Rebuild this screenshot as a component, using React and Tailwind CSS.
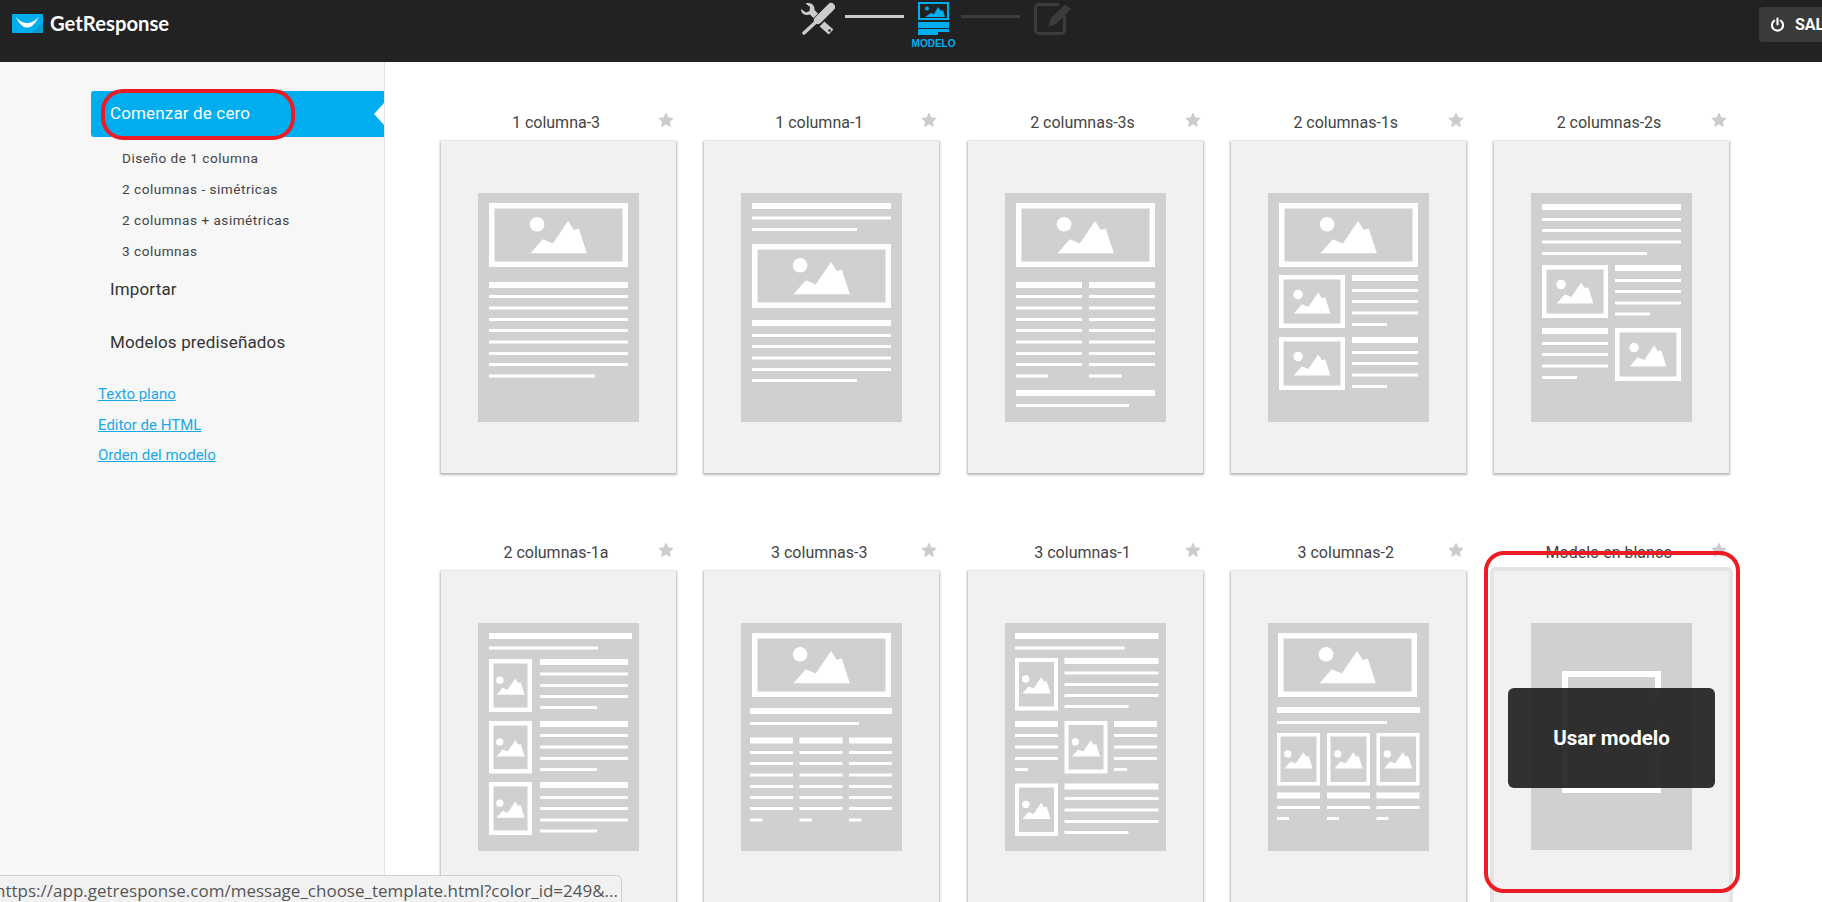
import React from 'react';

const subItems = ['Diseño de 1 columna', '2 columnas - simétricas', '2 columnas + asimétricas', '3 columnas'];
const links = ['Texto plano', 'Editor de HTML', 'Orden del modelo'];

// Thumbnail pieces, all in px inside the 161-wide grey sheet
const Bar = ({ x, y, w, h = 3 }) => <rect x={x} y={y} width={w} height={h} fill="#fff" />;

const TextCol = ({ x, w, ys, last }) => (
  <>
    {ys.map((y, i) => (
      <Bar key={y} x={x} y={y} w={i === ys.length - 1 && last ? last : w} h={i === 0 ? 6 : 3} />
    ))}
  </>
);

const Pic = ({ x, y, w, h, b = 4.5, s = 0.5 }) => (
  <>
    <rect x={x + b / 2} y={y + b / 2} width={w - b} height={h - b} fill="none" stroke="#fff" strokeWidth={b} />
    <g transform={`translate(${x + w / 2 - 28 * s} ${y + h / 2 - 18 * s}) scale(${s})`} fill="#fff">
      <circle cx="6.6" cy="7.3" r="7.3" />
      <polygon points="0,36.3 12.3,22.3 22.3,26.6 37.6,4 43.3,13 48.3,11.6 56.3,36.3" />
    </g>
  </>
);

const BigPic = ({ x = 11, y = 10, w = 139 }) => <Pic x={x} y={y} w={w} h={64} b={5.5} s={1} />;

const thinRows = [102, 113.5, 125, 136, 147.5, 159, 170];

const Sheet = ({ h = 229, children }) => (
  <div className="mx-auto w-[161px] bg-[#d0d0d0]">
    <svg width="161" height={h} viewBox={`0 0 161 ${h}`} className="block">
      {children}
    </svg>
  </div>
);

const OneCol3 = () => (
  <Sheet>
    <BigPic />
    <TextCol x={11} w={139} ys={[89, ...thinRows, 181.5]} last={106} />
  </Sheet>
);

const OneCol1 = () => (
  <Sheet>
    <TextCol x={11} w={139} ys={[10]} />
    <Bar x={11} y={23.5} w={139} />
    <Bar x={11} y={35} w={105} />
    <BigPic y={51} />
    <TextCol x={11} w={139} ys={[127, 141, 152, 163.5, 175, 186]} last={105} />
  </Sheet>
);

const TwoCol3s = () => (
  <Sheet>
    <BigPic />
    <TextCol x={11} w={66} ys={[89, ...thinRows, 181.5]} last={32} />
    <TextCol x={84} w={66} ys={[89, ...thinRows, 181.5]} last={33} />
    <Bar x={11} y={197} w={139} h={6} />
    <Bar x={11} y={211} w={113} />
  </Sheet>
);

const TwoCol1s = () => (
  <Sheet>
    <BigPic />
    <Pic x={11} y={82} w={66} h={53} s={0.65} />
    <TextCol x={84} w={66} ys={[82, 96, 107, 118.5, 130]} last={35} />
    <Pic x={11} y={144} w={66} h={53} s={0.65} />
    <TextCol x={84} w={66} ys={[144, 158, 169, 180.5, 192]} last={35} />
  </Sheet>
);

const TwoCol2s = () => (
  <Sheet>
    <TextCol x={11} w={139} ys={[11, 25, 36, 47.5, 59]} last={105} />
    <Pic x={11} y={72} w={66} h={53} s={0.65} />
    <TextCol x={84} w={66} ys={[72, 86, 97, 108.5, 119.5]} last={35} />
    <TextCol x={11} w={66} ys={[135, 149, 160, 171.5, 183]} last={35} />
    <Pic x={84} y={135} w={66} h={53} s={0.65} />
  </Sheet>
);

const TwoCol1a = () => (
  <Sheet h={228}>
    <Bar x={11} y={10} w={143} h={6} />
    <Bar x={11} y={23.5} w={109} />
    <Pic x={11} y={36} w={43} h={53} />
    <TextCol x={62} w={88} ys={[36, 49.5, 61, 72, 83]} last={57} />
    <Pic x={11} y={98} w={43} h={52.5} />
    <TextCol x={62} w={88} ys={[98, 111, 122.5, 134, 145]} last={57} />
    <Pic x={11} y={159} w={43} h={53} />
    <TextCol x={62} w={88} ys={[159, 173, 184, 195.5, 206.5]} last={57} />
  </Sheet>
);

const ThreeCol3 = () => {
  const rows = [114.5, 128, 139, 150.5, 162, 173, 184, 195.5];
  return (
    <Sheet h={228}>
      <BigPic />
      <Bar x={9} y={85} w={142} h={6} />
      <Bar x={9} y={99} w={109} />
      <TextCol x={9} w={43} ys={rows} last={12.5} />
      <TextCol x={58.5} w={43} ys={rows} last={12.5} />
      <TextCol x={108} w={43} ys={rows} last={12.5} />
    </Sheet>
  );
};

const ThreeCol1 = () => (
  <Sheet h={228}>
    <Bar x={10} y={10} w={143.5} h={6} />
    <Bar x={10} y={23.5} w={109.5} />
    <Pic x={10} y={35} w={43} h={52.5} b={4} />
    <TextCol x={59.5} w={94} ys={[35, 48.5, 60, 71, 82]} last={64} />
    <TextCol x={10} w={43} ys={[98, 111, 122.5, 134, 145]} last={13} />
    <Pic x={59.5} y={98} w={43} h={52.5} b={4} />
    <TextCol x={109} w={43} ys={[98, 111, 122.5, 134, 145]} last={13} />
    <Pic x={10} y={160.5} w={43} h={52.5} b={4} />
    <TextCol x={59.5} w={94} ys={[160.5, 174, 185.5, 197, 208]} last={64} />
  </Sheet>
);

const ThreeCol2 = () => {
  const cols = [9, 59, 108.5];
  return (
    <Sheet h={228}>
      <BigPic x={10} />
      <Bar x={9} y={84} w={143} h={6} />
      <Bar x={9} y={98} w={110} />
      {cols.map((x) => (
        <React.Fragment key={x}>
          <Pic x={x} y={110} w={43} h={52.5} b={3.5} />
          <TextCol x={x} w={43} ys={[169.5, 183, 194]} last={12} />
        </React.Fragment>
      ))}
    </Sheet>
  );
};

const Blank = () => (
  <Sheet h={227}>
    <rect x="34" y="51" width="93" height="116" fill="none" stroke="#fff" strokeWidth="6" />
    <polygon points="86,128 96,107 138,66 149,76 107,117" fill="#c6c6c6" stroke="#d0d0d0" strokeWidth="5" />
  </Sheet>
);

const templates = [
  { title: '1 columna-3', Thumb: OneCol3 },
  { title: '1 columna-1', Thumb: OneCol1 },
  { title: '2 columnas-3s', Thumb: TwoCol3s },
  { title: '2 columnas-1s', Thumb: TwoCol1s },
  { title: '2 columnas-2s', Thumb: TwoCol2s },
  { title: '2 columnas-1a', Thumb: TwoCol1a },
  { title: '3 columnas-3', Thumb: ThreeCol3 },
  { title: '3 columnas-1', Thumb: ThreeCol1 },
  { title: '3 columnas-2', Thumb: ThreeCol2 },
  { title: 'Modelo en blanco', Thumb: Blank, active: true },
];

const Star = () => (
  <svg width="16" height="16" viewBox="0 0 24 24" fill="#cccccc" stroke="#cccccc" strokeWidth="2" strokeLinejoin="round" className="shrink-0">
    <path d="M12 2.5l2.9 6.3 6.9.8-5.1 4.7 1.4 6.8L12 17.2l-6.100 3.900 1.400-6.800-5.100-4.700 6.900-.8z" />
  </svg>
);

const TemplateCard = ({ title, Thumb, active }) => (
  <div>
    <div className="flex h-[29px] items-start pl-[13px] pr-[2px]">
      <span className="flex-1 pt-px text-center text-[16px] leading-[20px] text-[#444]">{title}</span>
      <Star />
    </div>
    <div
      className={`relative h-[332px] bg-[#f1f1f1] pt-[52px] ${
        active
          ? 'rounded-[2px] shadow-[0_0_0_4px_#e4e4e4]'
          : 'shadow-[0_1px_2px_1px_rgba(0,0,0,0.28)]'
      }`}
    >
      <Thumb />
      {active && (
        <>
          <div className="absolute inset-x-[14px] top-[117px] flex h-[100px] items-center justify-center rounded-[6px] bg-[rgba(34,34,34,0.93)] text-[20.5px] font-bold text-white">
            Usar modelo
          </div>
          <div className="absolute -left-[10px] -top-[20px] h-[342px] w-[256px] rounded-[20px] border-4 border-[#ed1c24]" />
        </>
      )}
    </div>
  </div>
);

const Logo = () => (
  <svg width="31" height="19" viewBox="0 0 31 19" className="shrink-0">
    <rect width="31" height="19" rx="1" fill="#00aeef" />
    <path d="M31 9V18a1 1 0 0 1-1 1H19z" fill="#0a9bd1" />
    <path d="M3.500 2.700Q15 15.300 27 2.700Q15 25 3.500 2.700z" fill="#fff" />
  </svg>
);

const ToolsIcon = () => (
  <svg width="34" height="33" viewBox="0 0 34 33" fill="none" stroke="#cccccc" className="shrink-0">
    <path d="M30 5L17 18" strokeWidth="8" strokeLinecap="round" />
    <path d="M17 18L3 31" strokeWidth="3.500" strokeLinecap="round" />
    <path
      d="M0 7l5 3.500 3.500-1.500.5-4-4.500-3.500C10 0 14 3 13.500 8L17 11.500 12.500 16 9 12.500C4 14 0 12 0 7z"
      fill="#cccccc"
      stroke="none"
    />
    <path d="M21 22L30 30" strokeWidth="7" />
    <circle cx="28.500" cy="28.500" r="1.300" fill="#222" stroke="none" />
  </svg>
);

const PictureIcon = () => (
  <svg width="31" height="33" viewBox="0 0 31 33" fill="#00aeef" className="shrink-0">
    <rect x="1" y="1" width="29" height="16" fill="none" stroke="#00aeef" strokeWidth="2" />
    <circle cx="9" cy="6.500" r="2" />
    <polygon points="7,15 13,11 16,12 20,5 23,9 25,8 27,15" />
    <rect y="20" width="31" height="6" />
    <rect y="27" width="31" height="3" />
    <rect y="30" width="20" height="3" />
  </svg>
);

const EditIcon = () => (
  <svg width="38" height="33" viewBox="0 0 38 33" fill="none" className="shrink-0">
    <path d="M25 1.500H5a3.500 3.500 0 0 0-3.500 3.500V27A3.500 3.500 0 0 0 5 30.500H27a3.500 3.500 0 0 0 3.500-3.500V13" stroke="#3c3c3c" strokeWidth="3" />
    <polygon points="14,24 17,15 31,1.500 37,6 23,20.500" fill="#3c3c3c" />
  </svg>
);

const PowerIcon = () => (
  <svg width="15" height="16" viewBox="0 0 14 15" fill="none" stroke="#fff" strokeWidth="2" strokeLinecap="round" className="shrink-0">
    <path d="M7 1.500V7" />
    <path d="M3.800 3.500a5.200 5.200 0 1 0 6.400 0" />
  </svg>
);

const App = () => (
  <div className="relative flex h-screen w-full flex-col overflow-hidden bg-white font-['Roboto',sans-serif]">
    {/* Top bar */}
    <header className="flex h-[62px] shrink-0 items-start overflow-hidden bg-[#222222] pl-[12px]">
      <div className="flex h-[46px] w-[789px] shrink-0 items-center gap-[7px]">
        <Logo />
        <span className="font-['Lato',sans-serif] text-[20.25px] font-bold text-white">GetResponse</span>
      </div>

      <div className="flex w-[271px] shrink-0 items-start pt-[2px]">
        <ToolsIcon />
        <div className="ml-[10px] mt-[13px] h-[3px] w-[59px] bg-[#cccccc]" />
        <div className="ml-[14px] flex w-[31px] flex-col items-center">
          <PictureIcon />
          <span className="mt-[3px] whitespace-nowrap font-['Liberation_Sans',sans-serif] text-[10px] font-bold leading-[12px] text-[#00aeef]">
            MODELO
          </span>
        </div>
        <div className="ml-[12px] mt-[13px] h-[3px] w-[59px] bg-[#3c3c3c]" />
        <div className="ml-[14px] pt-px">
          <EditIcon />
        </div>
      </div>

      <div className="ml-[687px] mt-[7px] flex h-[35px] w-[110px] shrink-0 items-center gap-[10px] rounded-[4px] bg-[#3a3a3a] pl-[11px]">
        <PowerIcon />
        <span className="text-[16px] font-bold text-white">SALIR</span>
      </div>
    </header>

    <main className="flex min-h-0 flex-1">
      {/* Left nav */}
      <aside className="w-[385px] shrink-0 border-r border-[#e4e4e4] bg-[#f7f7f7] pl-[91px] pt-[29px]">
        <div className="relative flex h-[46px] items-center rounded-l-[3px] bg-[#00aeef] pl-[19px] text-[17px] tracking-[0.15px] text-white">
          Comenzar de cero
          <div className="absolute right-0 top-[12px] h-0 w-0 border-y-[11px] border-r-[10px] border-y-transparent border-r-white" />
          <div className="absolute -top-[2px] left-[10px] h-[51px] w-[194px] rounded-[22px] border-4 border-[#ed1c24]" />
        </div>

        <ul className="mt-[6px] pl-[31px]">
          {subItems.map((item) => (
            <li key={item} className="flex h-[31px] items-center text-[13.6px] tracking-[0.5px] text-[#444]">
              {item}
            </li>
          ))}
        </ul>

        <div className="flex h-[46px] items-center pl-[19px] text-[17px] tracking-[0.15px] text-[#333]">Importar</div>
        <div className="flex h-[60px] items-center pl-[19px] text-[17px] tracking-[0.15px] text-[#333]">Modelos prediseñados</div>

        <div className="mt-[6px] flex flex-col pl-[7px]">
          {links.map((link) => (
            <a key={link} className="flex h-[30.5px] items-center text-[15px] text-[#1ba9e6] underline" href="#">
              {link}
            </a>
          ))}
        </div>
      </aside>

      {/* Template grid */}
      <section className="grid grid-cols-[repeat(5,235px)] content-start gap-x-[28.25px] gap-y-[69px] pl-[56px] pt-[50px]">
        {templates.map((t) => (
          <TemplateCard key={t.title} {...t} />
        ))}
      </section>
    </main>

    {/* Browser status bubble */}
    <div className="absolute bottom-0 left-0 flex h-[27px] w-[622px] items-center justify-end overflow-hidden whitespace-nowrap rounded-tr-[6px] border-r border-t border-[#d0d0d0] bg-[#f1f1f1] pr-[3px] pt-[3px] font-['Open_Sans',sans-serif] text-[17px] text-[#555]">
      https://app.getresponse.com/message_choose_template.html?color_id=249&amp;...
    </div>
  </div>
);

export default App;
